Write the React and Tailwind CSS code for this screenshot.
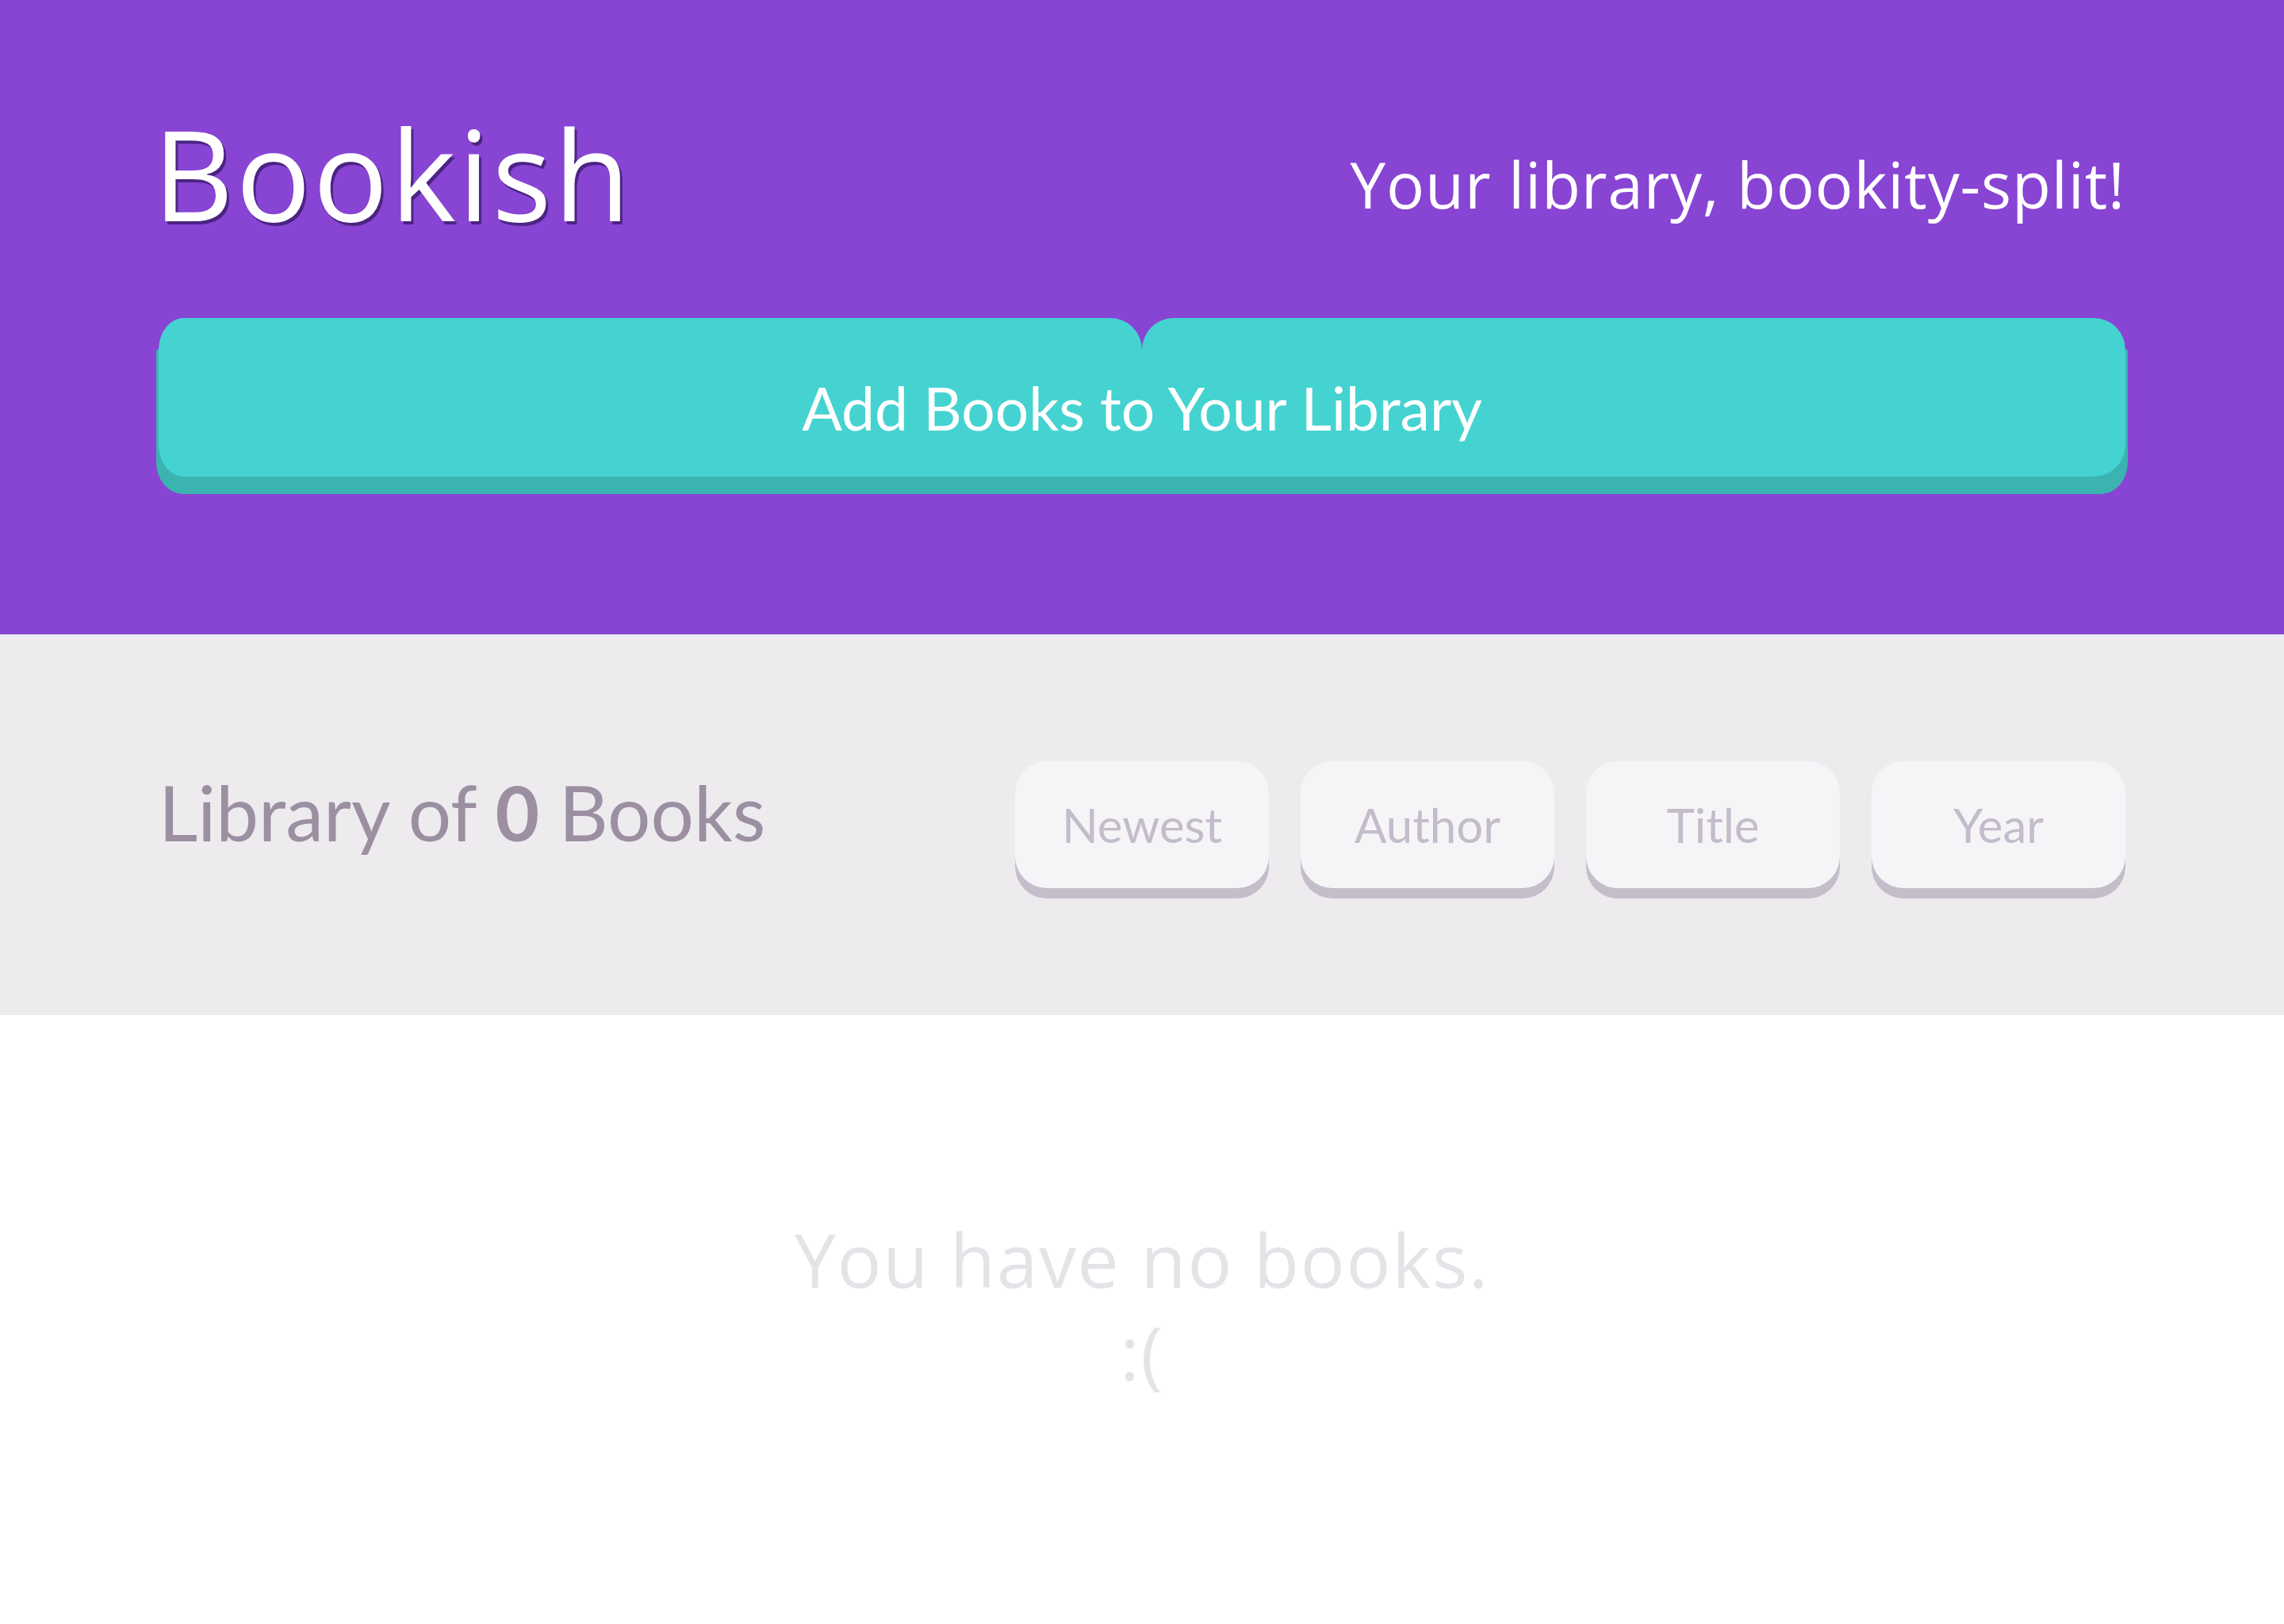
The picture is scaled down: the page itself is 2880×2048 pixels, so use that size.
import React from "react";

const sortOptions = ["Newest", "Author", "Title", "Year"];

function AddBooksButton() {
  return (
    <button className="mt-[104px] grid w-full text-left">
      {/* darker base under the button */}
      <div className="col-start-1 row-start-1 mt-[40px] -mb-[22px] -mx-[3px] rounded-b-[34px_40px] bg-[#3bb3b1]"></div>
      {/* two halves meet in a notch at the top, like an open book */}
      <div className="col-start-1 row-start-1 flex h-[200px]">
        <div className="flex-1 bg-[#45d3d1] rounded-tl-[32px_40px] rounded-bl-[32px_40px] rounded-tr-[40px]"></div>
        <div className="flex-1 bg-[#45d3d1] rounded-tl-[40px] rounded-tr-[40px] rounded-br-[40px]"></div>
      </div>
      <div className="col-start-1 row-start-1 flex items-center justify-center pt-[26px] text-[75px] leading-none text-white">
        Add Books to Your Library
      </div>
    </button>
  );
}

export default function App() {
  const books = [];

  return (
    <div className="min-h-screen bg-white font-[Lato,'Liberation_Sans',sans-serif]">
      <header className="h-[800px] bg-[#8844d3] px-[200px] pt-[140px]">
        <div className="flex items-start justify-between font-['Open_Sans',sans-serif]">
          <h1 className="-ml-[7px] text-[157px] leading-none tracking-[3px] text-white [text-shadow:3px_4px_0_#4a2483]">
            Bookish
          </h1>
          <p className="mt-[52px] text-[80px] leading-none tracking-[0.8px] text-white">
            Your library, bookity-split!
          </p>
        </div>
        <AddBooksButton />
      </header>

      <section className="flex h-[480px] items-center justify-between bg-[#edebee] px-[200px]">
        <h2 className="mb-[32px] text-[96px] leading-none text-[#9b8fa1]">
          Library of <span className="font-bold">{books.length}</span> Books
        </h2>
        <div className="flex gap-[40px]">
          {sortOptions.map((opt) => (
            <button
              key={opt}
              className="flex h-[160px] w-[320px] items-center justify-center rounded-[40px] bg-[#f5f5f8] text-[60px] leading-none text-[#c5bccb] shadow-[0_13px_0_#c4bdca]"
            >
              {opt}
            </button>
          ))}
        </div>
      </section>

      <main className="pt-[250px] text-center font-['Open_Sans',sans-serif] text-[93px] leading-[117px] tracking-[1.8px] text-[#e5e3e8]">
        <p>You have no books.</p>
        <p>:(</p>
      </main>
    </div>
  );
}
